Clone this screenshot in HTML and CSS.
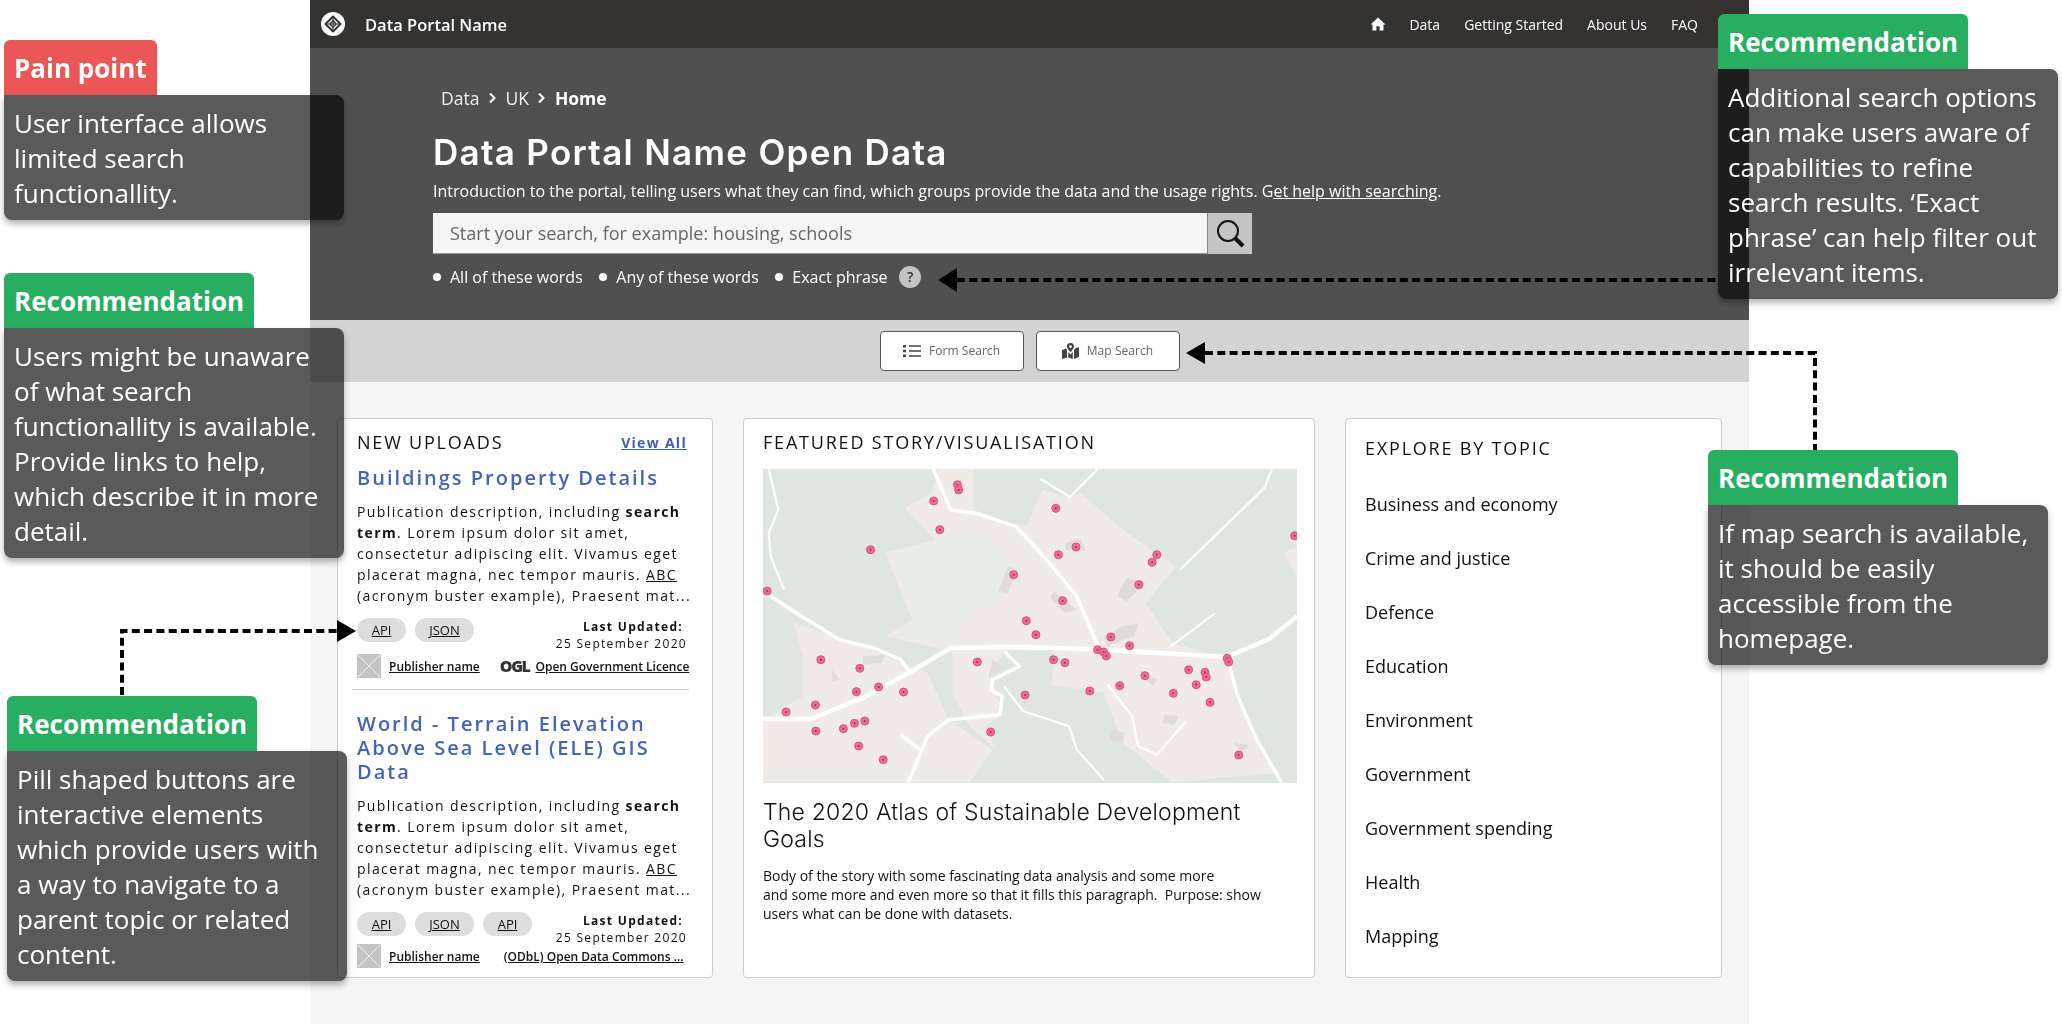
FILE: index.html
```html
<!DOCTYPE html>
<html lang="en">

<head>
  <meta charset="UTF-8">
  <meta name="viewport" content="width=device-width, initial-scale=1.0">
  <title>Data Portal Name</title>
  <link rel="stylesheet" href="styles.css">
</head>

<body>
  <svg class="defs" width="0" height="0">
    <symbol id="thumb" viewBox="0 0 24 24">
      <rect width="24" height="24" rx="1" fill="#c4c4c4" />
      <path d="M1 1 23 23M23 1 1 23" stroke="#eee" stroke-width="1" />
    </symbol>
    <symbol id="pin" viewBox="0 0 10 10" overflow="visible">
      <circle cx="5" cy="5" r="4" fill="#ec6d94" stroke="#dc4f80" stroke-width="1" />
      <circle cx="5" cy="5" r="1" fill="#a52a55" />
    </symbol>
  </svg>

  <div class="page">
    <header class="topbar">
      <a class="brand">
        <svg class="brand-logo" width="24" height="24" viewBox="0 0 24 24">
          <circle cx="12" cy="12" r="12" fill="#fff" />
          <path d="M12 4.500 19.500 12 12 19.500 4.500 12Z" fill="none" stroke="#353331" stroke-width="2" stroke-linejoin="round" />
          <path d="M12 8.500 15.500 12 12 15.500 8.500 12ZM5 12H19M12 5V19" fill="none" stroke="#353331" stroke-width="1.200" />
        </svg>
        <span>Data Portal Name</span>
      </a>
      <nav class="topnav">
        <svg class="home-icon" width="16" height="16" viewBox="0 0 16 16">
          <path d="M8 1.500 15.500 8.500H13.500V14.500H9.600V10.200H6.400V14.500H2.500V8.500H.5Z" fill="#fff" />
        </svg>
        <a>Data</a>
        <a>Getting Started</a>
        <a>About Us</a>
        <a>FAQ</a>
      </nav>
    </header>

    <section class="hero">
      <div class="crumbs">
        <span>Data</span>
        <svg width="9" height="12" viewBox="0 0 9 12"><path d="M2 1.500 6.500 6 2 10.500" fill="none" stroke="#fff" stroke-width="2" /></svg>
        <span>UK</span>
        <svg width="9" height="12" viewBox="0 0 9 12"><path d="M2 1.500 6.500 6 2 10.500" fill="none" stroke="#fff" stroke-width="2" /></svg>
        <strong>Home</strong>
      </div>
      <h1>Data Portal Name Open Data</h1>
      <p class="intro">Introduction to the portal, telling users what they can find, which groups provide the data and the usage rights. G<a>et help with searching</a>.</p>
      <div class="searchbox">
        <div class="search-input">Start your search, for example: housing, schools</div>
        <div class="search-btn">
          <svg width="30" height="30" viewBox="0 0 30 30">
            <circle cx="13" cy="12" r="10" fill="none" stroke="#111" stroke-width="2" />
            <path d="M20 19 28 27" stroke="#111" stroke-width="4" />
          </svg>
        </div>
      </div>
      <div class="options">
        <span class="option">All of these words</span>
        <span class="option">Any of these words</span>
        <span class="option">Exact phrase</span>
        <span class="help">?</span>
      </div>
    </section>

    <div class="band">
      <button class="mode-btn">
        <svg width="18" height="14" viewBox="0 0 18 14">
          <path d="M6 2H18M6 7H18M6 12H18" stroke="#444" stroke-width="1.600" />
          <path d="M0 1H3V3.400H0ZM0 5.800H3V8.200H0ZM0 10.600H3V13H0Z" fill="#444" />
        </svg>
        Form Search
      </button>
      <button class="mode-btn">
        <svg width="17" height="16" viewBox="0 0 17 16">
          <path d="M8.500 0A3.600 3.600 0 0 0 4.900 3.600C4.900 5.200 7.200 7.900 8.500 9.500 9.800 7.900 12.100 5.200 12.100 3.600A3.600 3.600 0 0 0 8.500 0ZM8.500 5A1.400 1.400 0 1 1 8.500 2.200 1.400 1.400 0 0 1 8.500 5Z" fill="#444" />
          <path d="M0 7 4 5.500 5 7V14.500L0 16ZM6.200 9 8.500 11.500 10.800 9V16L6.200 14.500ZM12 7 13 5.500 17 4V14L12 16Z" fill="#444" />
        </svg>
        Map Search
      </button>
    </div>

    <main class="cards">
      <section class="card uploads">
        <div class="card-head">
          <h2>NEW UPLOADS</h2>
          <a class="view-all">View All</a>
        </div>

        <article class="publication first">
          <h3>Buildings Property Details</h3>
          <p class="desc">Publication description, including <b>search term</b>. Lorem ipsum dolor sit amet, consectetur adipiscing elit. Vivamus eget placerat magna, nec tempor mauris. <u>ABC</u> (acronym buster example), Praesent mat...</p>
          <div class="meta">
            <div class="pills"><a class="pill">API</a><a class="pill json">JSON</a></div>
            <div class="updated"><b>Last Updated:</b><span>25 September 2020</span></div>
          </div>
          <div class="foot">
            <svg class="thumb"><use href="#thumb" /></svg>
            <a class="publisher">Publisher name</a>
            <span class="ogl">OGL</span>
            <a class="licence">Open Government Licence</a>
          </div>
        </article>

        <article class="publication second">
          <h3>World - Terrain Elevation Above Sea Level (ELE) GIS Data</h3>
          <p class="desc">Publication description, including <b>search term</b>. Lorem ipsum dolor sit amet, consectetur adipiscing elit. Vivamus eget placerat magna, nec tempor mauris. <u>ABC</u> (acronym buster example), Praesent mat...</p>
          <div class="meta">
            <div class="pills"><a class="pill">API</a><a class="pill json">JSON</a><a class="pill">API</a></div>
            <div class="updated"><b>Last Updated:</b><span>25 September 2020</span></div>
          </div>
          <div class="foot">
            <svg class="thumb"><use href="#thumb" /></svg>
            <a class="publisher">Publisher name</a>
            <a class="licence odbl">(ODbL) Open Data Commons ...</a>
          </div>
        </article>
      </section>

      <section class="card story">
        <h2>FEATURED STORY/VISUALISATION</h2>
        <svg class="map" width="534" height="314" viewBox="0 0 534 314">
          <rect width="534" height="314" fill="#dfe6df" />
          <g class="map-base" transform="scale(.3827 .3333) translate(-60 -178)">
            <path class="land" d="M140 640 300 700 440 770 490 790 545 930 660 1020 600 1118H60V930L165 860 165 740Z" />
            <path class="land" d="M430 295 500 250 520 178H610V300L700 340 750 350 790 240 860 265 890 250 1000 360 1140 470 1060 580 1130 700 1280 750 1290 860 1400 1090 1130 1118 1000 1000 950 850 815 825 820 720 690 725 555 725 380 680 450 630 380 430 510 390Z" />
            <path class="pale" d="M400 430 520 390 640 360 730 480 690 560 590 620 560 700 400 680 455 630Z" />
            <path class="land" d="M555 725H690L650 800 680 880 680 920 640 950 670 1020 600 950 555 850Z" />
            <path class="land" d="M1420 430 1456 410V500Z" />
            <path class="house" d="M700 470 725 480 700 550 675 545ZM850 400 890 385 905 425 850 420ZM1010 505 1060 520 1010 575 985 560ZM820 545 880 600 850 610 810 565ZM1000 650 1040 640 1030 680 960 710 950 680ZM660 750 695 775 650 800ZM320 740 380 735 370 760 320 765ZM240 780 260 810 240 815ZM1110 915 1145 920 1135 945 1105 940ZM970 960 1005 970 1000 1000 965 990ZM1290 1000 1330 1005 1310 1030ZM1045 780 1090 810 1080 830 1050 800Z" />
            <g class="roads">
              <path d="M505 178 550 300 620 312 720 350 770 410 830 490 880 560 910 640 935 710" />
              <path d="M60 545 140 605 260 690 350 715 420 750 445 790" />
              <path class="wide" d="M60 928H185L330 860 440 790 550 715 720 712 920 718 1270 742 1380 690 1456 620" />
              <path d="M1275 750 1300 860 1350 990 1415 1118" />
              <path d="M690 725 730 770 660 810 655 840 685 860 680 915 545 930 490 980 440 1118" />
              <path class="thin" d="M690 830 740 905 860 950 880 1020 950 1110" />
              <path class="thin" d="M75 178 100 300 75 370 80 440 115 540" />
              <path class="thin" d="M785 208 862 262 935 178" />
              <path class="thin" d="M1390 178 1370 235 1150 480" />
              <path class="thin" d="M960 825 1025 920 1040 1010 1090 1035 1165 935" />
              <path class="thin" d="M1125 710 1240 612" />
              <path d="M420 975 470 1020" />
            </g>
          </g>
          <g class="pins">
            <use href="#pin" x="189.400" y="10.700" width="10" height="10" /><use href="#pin" x="190.600" y="16" width="10" height="10" />
            <use href="#pin" x="165.700" y="27" width="10" height="10" /><use href="#pin" x="171.800" y="55.700" width="10" height="10" />
            <use href="#pin" x="102.500" y="75.700" width="10" height="10" /><use href="#pin" x="-.8" y="117" width="10" height="10" />
            <use href="#pin" x="287.800" y="34.300" width="10" height="10" /><use href="#pin" x="308" y="73" width="10" height="10" />
            <use href="#pin" x="290.400" y="80.700" width="10" height="10" /><use href="#pin" x="388.800" y="80.700" width="10" height="10" />
            <use href="#pin" x="384.200" y="88.300" width="10" height="10" /><use href="#pin" x="370.800" y="110.700" width="10" height="10" />
            <use href="#pin" x="245.700" y="100.700" width="10" height="10" /><use href="#pin" x="294.700" y="126.700" width="10" height="10" />
            <use href="#pin" x="258.300" y="146.700" width="10" height="10" /><use href="#pin" x="267.900" y="160.700" width="10" height="10" />
            <use href="#pin" x="342.900" y="163" width="10" height="10" /><use href="#pin" x="361.600" y="171.700" width="10" height="10" />
            <use href="#pin" x="329.500" y="175.700" width="10" height="10" /><use href="#pin" x="335.600" y="178" width="10" height="10" />
            <use href="#pin" x="338.300" y="182" width="10" height="10" /><use href="#pin" x="526.600" y="61.700" width="10" height="10" />
            <use href="#pin" x="459.200" y="184.300" width="10" height="10" /><use href="#pin" x="460.700" y="188" width="10" height="10" />
            <use href="#pin" x="52.800" y="185.700" width="10" height="10" /><use href="#pin" x="91.800" y="194.300" width="10" height="10" />
            <use href="#pin" x="209.300" y="188" width="10" height="10" /><use href="#pin" x="285.500" y="185.700" width="10" height="10" />
            <use href="#pin" x="297" y="188.700" width="10" height="10" /><use href="#pin" x="88.400" y="217.700" width="10" height="10" />
            <use href="#pin" x="110.600" y="213" width="10" height="10" /><use href="#pin" x="135.500" y="218" width="10" height="10" />
            <use href="#pin" x="47.400" y="231" width="10" height="10" /><use href="#pin" x="18" y="238" width="10" height="10" />
            <use href="#pin" x="257.100" y="221" width="10" height="10" /><use href="#pin" x="321.800" y="217" width="10" height="10" />
            <use href="#pin" x="351.700" y="211.700" width="10" height="10" /><use href="#pin" x="376.900" y="201.700" width="10" height="10" />
            <use href="#pin" x="420.600" y="195.700" width="10" height="10" /><use href="#pin" x="437" y="198.300" width="10" height="10" />
            <use href="#pin" x="438.200" y="203" width="10" height="10" /><use href="#pin" x="428.200" y="210.700" width="10" height="10" />
            <use href="#pin" x="405.300" y="219.300" width="10" height="10" /><use href="#pin" x="442" y="228.300" width="10" height="10" />
            <use href="#pin" x="47.800" y="257" width="10" height="10" /><use href="#pin" x="75.400" y="254.700" width="10" height="10" />
            <use href="#pin" x="86.500" y="249.300" width="10" height="10" /><use href="#pin" x="96.800" y="247" width="10" height="10" />
            <use href="#pin" x="222.700" y="258" width="10" height="10" /><use href="#pin" x="90.700" y="272" width="10" height="10" />
            <use href="#pin" x="115.200" y="285.700" width="10" height="10" /><use href="#pin" x="470.700" y="281" width="10" height="10" />
          </g>
        </svg>
        <h3>The 2020 Atlas of Sustainable Development Goals</h3>
        <p>Body of the story with some fascinating data analysis and some more<br>and some more and even more so that it fills this paragraph.&nbsp; Purpose: show users what can be done with datasets.</p>
      </section>

      <section class="card topics">
        <h2>EXPLORE BY TOPIC</h2>
        <ul>
          <li>Business and economy</li>
          <li>Crime and justice</li>
          <li>Defence</li>
          <li>Education</li>
          <li>Environment</li>
          <li>Government</li>
          <li>Government spending</li>
          <li>Health</li>
          <li>Mapping</li>
        </ul>
      </section>
    </main>
  </div>

  <!-- annotations over the screenshot -->
  <svg class="arrows" width="2062" height="1024" viewBox="0 0 2062 1024">
    <g class="dash">
      <path d="M957 280H1718" />
      <path d="M1205 353H1815V450" />
      <path d="M122 695V631H337" />
    </g>
    <path d="M938 280 957 268V292Z" />
    <path d="M1186 353 1205 342V364Z" />
    <path d="M356 631 337 620V642Z" />
  </svg>

  <aside class="note pain-note">
    <div class="note-tag red">Pain point</div>
    <div class="note-body"><p>User interface allows limited search functionallity.</p></div>
  </aside>
  <aside class="note links-note">
    <div class="note-tag">Recommendation</div>
    <div class="note-body"><p>Users might be unaware of what search functionallity is available. Provide links to help, which describe it in more detail.</p></div>
  </aside>
  <aside class="note pills-note">
    <div class="note-tag">Recommendation</div>
    <div class="note-body"><p>Pill shaped buttons are interactive elements which provide users with a way to navigate to a parent topic or related content.</p></div>
  </aside>
  <aside class="note options-note">
    <div class="note-tag">Recommendation</div>
    <div class="note-body"><p>Additional search options can make users aware of capabilities to refine search results. ‘Exact phrase’ can help filter out irrelevant items.</p></div>
  </aside>
  <aside class="note map-note">
    <div class="note-tag">Recommendation</div>
    <div class="note-body"><p>If map search is available, it should be easily accessible from the homepage.</p></div>
  </aside>
</body>

</html>
```

FILE: styles.css
```css
* {
  box-sizing: border-box;
}

html,
body {
  margin: 0;
  height: 1024px;
  overflow: hidden;
  background-color: #fff;
  font-family: "Open Sans", "Liberation Sans", sans-serif;
}

h1,
h2,
h3,
p,
ul {
  margin: 0;
  padding: 0;
}

.defs {
  display: block;
  height: 0;
}

.page {
  width: 1439px;
  height: 1024px;
  margin-left: 310px;
  background-color: #f5f5f5;
}

/* top bar */
.topbar {
  display: flex;
  align-items: center;
  justify-content: space-between;
  height: 48px;
  padding: 0 51px 0 11px;
  background-color: #353331;
  color: #fff;
}

.brand {
  display: flex;
  align-items: center;
  gap: 20px;
  font-size: 16.500px;
  font-weight: 600;
}

.topnav {
  display: flex;
  align-items: center;
  gap: 24px;
  font-size: 14px;
}

.home-icon {
  margin-right: -1px;
}

/* hero */
.hero {
  height: 272px;
  padding: 38px 0 0 123px;
  background-color: #505050;
  color: #fff;
}

.crumbs {
  display: flex;
  align-items: center;
  gap: 8.500px;
  height: 24px;
  margin-left: 8px;
  font-size: 17.500px;
  color: #eee;
}

.crumbs strong {
  color: #fff;
}

.hero h1 {
  margin-top: 20px;
  font-family: Inter, "Open Sans", sans-serif;
  font-size: 35px;
  font-weight: 600;
  line-height: 44px;
  letter-spacing: 1.300px;
}

.intro {
  margin-top: 6px;
  font-size: 16px;
  line-height: 22px;
}

.intro a {
  text-decoration: underline;
}

.searchbox {
  display: flex;
  width: 819px;
  height: 41px;
  margin-top: 11px;
}

.search-input {
  flex: 1;
  padding-left: 17px;
  background-color: #f5f5f5;
  border-bottom: 1px solid #999;
  font-size: 18px;
  line-height: 41px;
  color: #666;
}

.search-btn {
  display: flex;
  align-items: center;
  justify-content: center;
  width: 45px;
  background-color: #c4c4c4;
  border-left: 1px solid #888;
}

.options {
  display: flex;
  align-items: center;
  height: 24px;
  margin-top: 11px;
  font-size: 16px;
}

.option {
  display: flex;
  align-items: center;
  gap: 9px;
  margin-right: 16.500px;
}

.option::before {
  content: "";
  width: 8px;
  height: 8px;
  border-radius: 50%;
  background-color: #fff;
}

.help {
  width: 22px;
  height: 22px;
  margin-left: -5px;
  border-radius: 50%;
  background-color: #c4c4c4;
  color: #333;
  font-size: 14px;
  font-weight: 600;
  line-height: 22px;
  text-align: center;
}

/* search mode band */
.band {
  display: flex;
  align-items: center;
  justify-content: center;
  gap: 12px;
  height: 62px;
  padding-bottom: 1px;
  background-color: #d3d3d3;
}

.mode-btn {
  display: flex;
  align-items: center;
  justify-content: center;
  gap: 8px;
  width: 144px;
  height: 40px;
  padding: 0;
  background-color: #fff;
  border: 1px solid #555;
  border-radius: 4px;
  font-family: inherit;
  font-size: 12px;
  letter-spacing: .05px;
  color: #666;
}

/* cards */
.cards {
  display: grid;
  grid-template-columns: 376px 572px 377px;
  column-gap: 30px;
  padding: 36px 0 0 27px;
}

.card {
  height: 560px;
  background-color: #fff;
  border: 1px solid #ccc;
  border-radius: 4px;
  color: #111;
}

.card h2 {
  font-size: 18px;
  font-weight: 400;
  line-height: 22px;
  letter-spacing: 1.800px;
}

.uploads {
  padding: 12px 23px 0 19px;
}

.card-head {
  display: flex;
  align-items: center;
  justify-content: space-between;
}

.card-head .view-all {
  margin-right: 2px;
  color: #3f5fb5;
  font-size: 14px;
  font-weight: 700;
  letter-spacing: 1.300px;
  text-decoration: underline;
}

.publication h3 {
  color: #4463b9;
  font-size: 20px;
  font-weight: 600;
  line-height: 24px;
  letter-spacing: 2px;
}

.publication.first {
  margin: 13px 0 0 -5px;
  padding: 0 0 11px 5px;
  border-bottom: 1px solid #ccc;
}

.publication.second {
  margin-top: 22px;
}

.desc {
  margin: 11px -8px 0 0;
  font-size: 14px;
  line-height: 21px;
  letter-spacing: 1.400px;
}

.meta {
  display: flex;
  justify-content: space-between;
  height: 33px;
  margin-top: 12px;
}

.pills {
  display: flex;
  gap: 9px;
  height: 24px;
}

.pill {
  width: 49px;
  background-color: #ddd;
  border-radius: 12px;
  font-size: 13px;
  font-weight: 500;
  line-height: 25px;
  text-align: center;
  text-decoration: underline;
}

.pill.json {
  width: 59px;
}

.updated {
  display: flex;
  flex-direction: column;
  align-items: flex-end;
  padding: 1px 2px 0 0;
  font-size: 12px;
  line-height: 16.500px;
  letter-spacing: 1.300px;
}

.updated b {
  margin-right: 4px;
}

.foot {
  display: flex;
  align-items: center;
  height: 24px;
  margin-top: 3px;
  font-size: 12px;
  font-weight: 600;
  white-space: nowrap;
}

.second .foot {
  margin-top: -1px;
}

.thumb {
  flex: none;
  width: 24px;
  height: 24px;
  margin-right: 8px;
}

.publisher,
.licence {
  text-decoration: underline;
}

.ogl {
  margin-left: 20px;
  margin-right: 6px;
  color: #333;
  font-size: 16px;
  font-weight: 800;
  letter-spacing: -1.400px;
}

.licence.odbl {
  margin-left: 24px;
}

.story {
  padding: 12px 0 0 19px;
}

.story .map {
  display: block;
  margin-top: 16px;
}

.map-base {
  filter: blur(.6px);
}

.land {
  fill: #f0ebe7;
}

.pale {
  fill: #e8ede7;
}

.house {
  fill: #dfdcd8;
}

.roads path {
  fill: none;
  stroke: #fff;
  stroke-width: 3.500px;
  stroke-linejoin: round;
  vector-effect: non-scaling-stroke;
}

.roads .wide {
  stroke-width: 4.500px;
}

.roads .thin {
  stroke-width: 2.200px;
}

.story h3 {
  width: 500px;
  margin-top: 16px;
  font-family: Inter, "Open Sans", sans-serif;
  font-size: 23px;
  font-weight: 300;
  line-height: 27px;
  letter-spacing: .2px;
}

.story p {
  width: 510px;
  margin-top: 13px;
  font-size: 14px;
  line-height: 19px;
}

.topics {
  padding: 18px 0 0 19px;
}

.topics ul {
  margin-top: 18px;
  list-style: none;
}

.topics li {
  font-size: 18px;
  line-height: 54px;
}

/* arrows */
.arrows {
  position: absolute;
  top: 0;
  left: 0;
}

.arrows .dash path {
  fill: none;
  stroke: #000;
  stroke-width: 4px;
  stroke-dasharray: 8 4.300;
}

/* annotation notes */
.note {
  position: absolute;
  width: 340px;
  color: #fff;
}

.note-tag {
  display: inline-block;
  vertical-align: top;
  height: 55px;
  padding: 0 10px;
  background-color: #27ae60;
  border-radius: 6px 6px 0 0;
  font-size: 26px;
  font-weight: 700;
  line-height: 57px;
}

.note-tag.red {
  background-color: #eb5757;
}

.note-body {
  position: relative;
  padding: 11px 10px 9px 10px;
  font-size: 26px;
  line-height: 35px;
}

/* the panel darkens what lies under it, the text stays white */
.note-body::before {
  content: "";
  position: absolute;
  inset: 0;
  background-color: #5a5a5a;
  border-radius: 0 8px 8px 8px;
  box-shadow: 0 4px 6px rgba(0, 0, 0, .3);
  mix-blend-mode: multiply;
}

.note-body p {
  position: relative;
}

.pain-note {
  top: 40px;
  left: 4px;
}

.links-note {
  top: 273px;
  left: 4px;
}

.pills-note {
  top: 696px;
  left: 7px;
}

.options-note {
  top: 14px;
  left: 1718px;
}

.map-note {
  top: 450px;
  left: 1708px;
}
```
